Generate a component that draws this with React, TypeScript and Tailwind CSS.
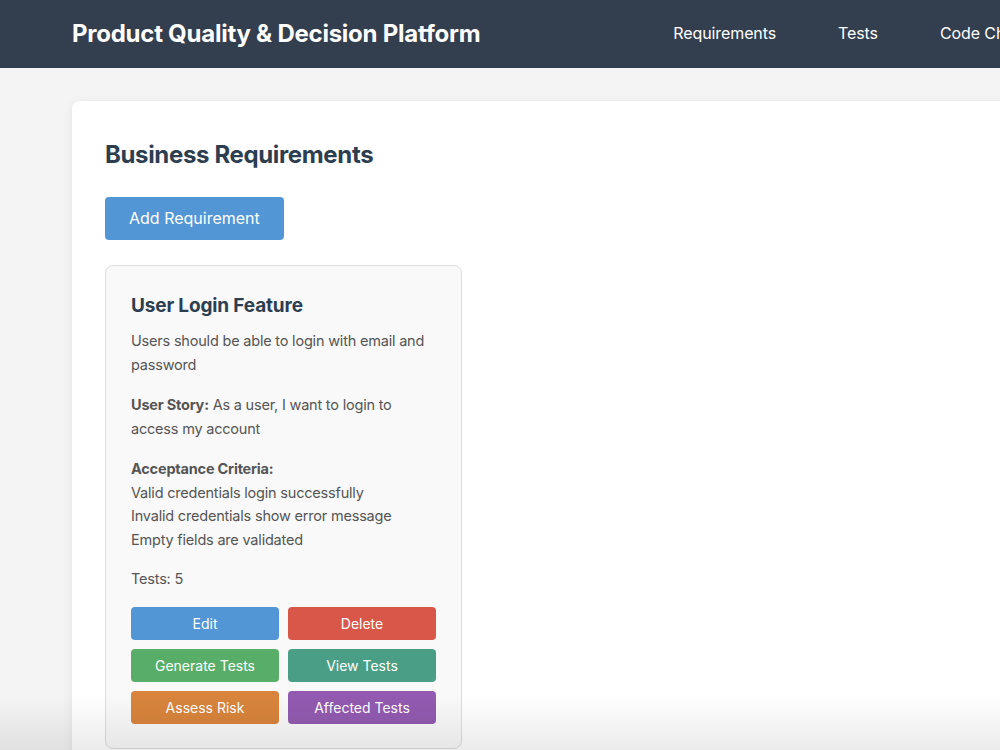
import React from 'react';

const actions = [
  { label: 'Edit', color: 'bg-[#5296d5]' },
  { label: 'Delete', color: 'bg-[#d85748]' },
  { label: 'Generate Tests', color: 'bg-[#58ae68]' },
  { label: 'View Tests', color: 'bg-[#4a9e86]' },
  { label: 'Assess Risk', color: 'bg-[#d8843c]' },
  { label: 'Affected Tests', color: 'bg-[#925ab0]' },
];

const criteria = [
  'Valid credentials login successfully',
  'Invalid credentials show error message',
  'Empty fields are validated',
];

function RequirementCard() {
  return (
    <div className="w-[357px] rounded-lg border border-[#dddddd] bg-[#f9f9f9] px-[25px] pt-6 pb-6">
      <h3 className="mt-[2px] text-[19px] font-bold leading-[28px] tracking-[-0.15px] text-[#2c3e50]">
        User Login Feature
      </h3>
      <p className="mt-[9px] text-[14.5px] leading-[24px] tracking-[-0.2px] text-[#555]">
        Users should be able to login with email and password
      </p>
      <p className="mt-4 text-[14.5px] leading-[24px] tracking-[-0.2px] text-[#555]">
        <strong className="font-bold">User Story:</strong> As a user, I want to login to access my account
      </p>
      <div className="mt-4 text-[14.5px] leading-[23.5px] tracking-[-0.2px] text-[#555]">
        <strong className="font-bold">Acceptance Criteria:</strong>
        {criteria.map((c) => (
          <div key={c}>{c}</div>
        ))}
      </div>
      <p className="mt-4 text-[14.5px] leading-[24px] tracking-[-0.2px] text-[#555]">Tests: 5</p>
      <div className="mt-4 grid grid-cols-2 gap-x-[9px] gap-y-[9px]">
        {actions.map((a) => (
          <button
            key={a.label}
            className={`${a.color} h-[33px] rounded text-[14px] text-white`}
          >
            {a.label}
          </button>
        ))}
      </div>
    </div>
  );
}

export default function App() {
  return (
    <div
      className="relative h-screen w-full overflow-hidden bg-[#f4f4f4]"
      style={{ fontFamily: 'Inter, "Noto Sans", sans-serif' }}
    >
      <div className="w-[1400px]">
        <header className="flex h-[68px] items-center bg-[#333e4f] px-[72px] text-white">
          <h1 className="text-[24px] font-bold tracking-[-0.25px]">Product Quality &amp; Decision Platform</h1>
          <nav className="ml-[193px] flex gap-[62px] pb-[2px] text-[16px] tracking-[-0.1px]">
            <a>Requirements</a>
            <a>Tests</a>
            <a>Code Changes</a>
            <a>Risk Analysis</a>
          </nav>
        </header>
        <main className="px-[72px] pt-[33px]">
          <div className="rounded-lg bg-white p-[33px] shadow-[0_2px_10px_rgba(0,0,0,0.08)]">
            <h2 className="mt-[5px] text-[24px] font-bold leading-[32px] tracking-[-0.35px] text-[#2c3e50]">
              Business Requirements
            </h2>
            <button className="mt-[26px] rounded bg-[#5296d5] px-6 py-[11px] text-[16px] leading-[21px] text-white">
              Add Requirement
            </button>
            <div className="mt-[25px]">
              <RequirementCard />
            </div>
          </div>
        </main>
      </div>
      <div className="pointer-events-none absolute bottom-0 left-0 h-[55px] w-full bg-linear-to-b from-transparent to-black/8" />
    </div>
  );
}
